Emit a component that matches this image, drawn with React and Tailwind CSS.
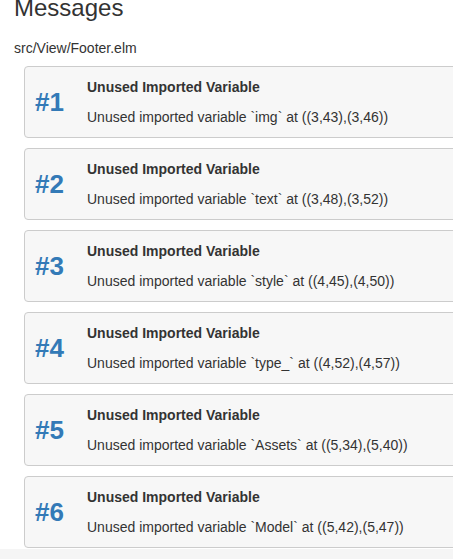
import React from "react";

const items = [
  ["img", "((3,43),(3,46))"],
  ["text", "((3,48),(3,52))"],
  ["style", "((4,45),(4,50))"],
  ["type_", "((4,52),(4,57))"],
  ["Assets", "((5,34),(5,40))"],
  ["Model", "((5,42),(5,47))"],
];

export default function App() {
  return (
    <div
      className="w-[453px] h-[559px] overflow-hidden bg-white text-[#333333] flex flex-col"
      style={{ fontFamily: '"Liberation Sans", Arial, sans-serif' }}
    >
      <div className="pl-[14px] flex flex-col flex-none">
        <h3 className="mt-[-5px] text-[24px] leading-[26.4px] font-normal whitespace-nowrap">Messages</h3>
        <div className="mt-[17px] text-[14px] leading-[20px] whitespace-nowrap">src/View/Footer.elm</div>
        <div className="mt-[8px] pl-[10px] flex flex-col gap-[10px]">
          {items.map(([name, loc], i) => (
            <div
              key={i}
              className="w-[480px] h-[72px] flex-none flex items-center border border-[#cccccc] rounded-[4px] bg-[#f7f7f7]"
            >
              <div className="w-[62px] pl-[10px] flex-none text-[26px] leading-[30px] font-bold text-[#337ab7]">
                #{i + 1}
              </div>
              <div className="flex flex-col gap-[10px] text-[14px] leading-[20px] whitespace-nowrap">
                <div className="font-bold">Unused Imported Variable</div>
                <div>
                  Unused imported variable `{name}` at {loc}
                </div>
              </div>
            </div>
          ))}
        </div>
      </div>
      <div className="mt-[1px] flex-1 bg-[#f5f5f5]" />
    </div>
  );
}
